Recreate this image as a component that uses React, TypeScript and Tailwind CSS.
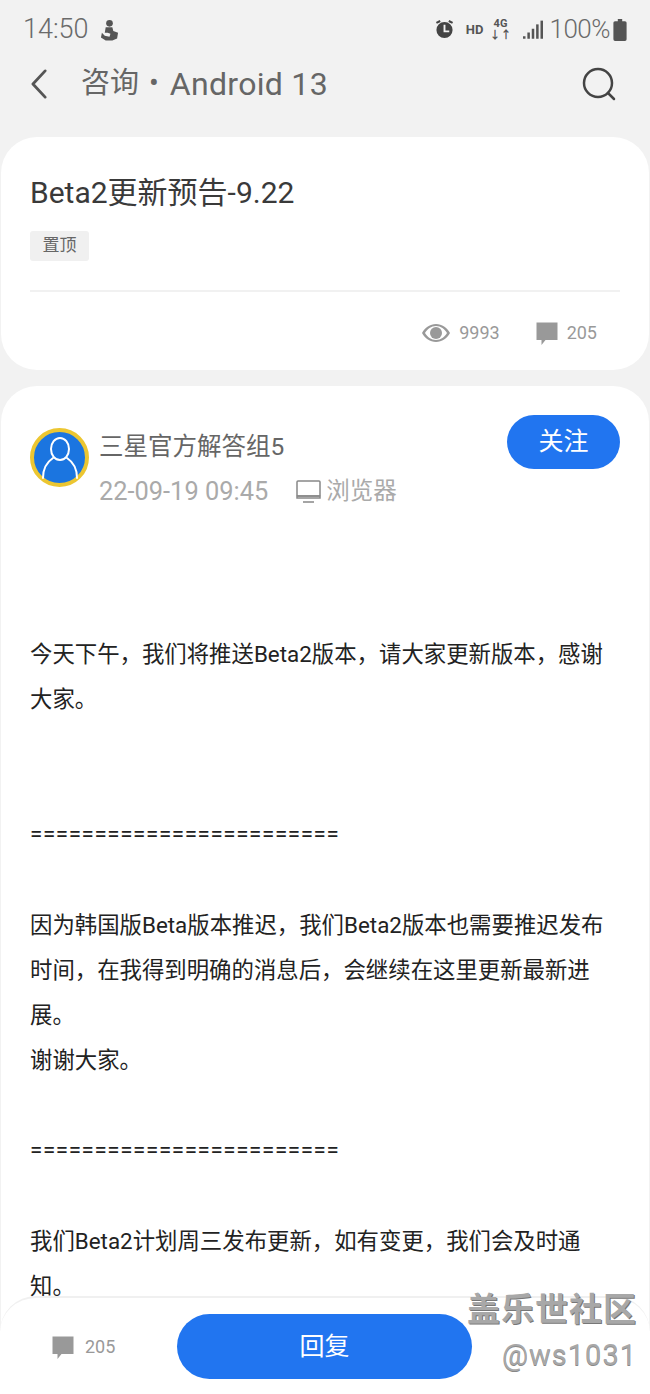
import React from "react";

const font = "font-['Roboto','Noto_Sans_CJK_SC',sans-serif]";

function CommentIcon({ className }: { className: string }) {
  return (
    <svg viewBox="0 0 24 24" className={className} fill="currentColor">
      <path d="M1.5 1.5h21v17.5H10.5L6.5 24v-5h-5z" />
    </svg>
  );
}

function StatusBar() {
  return (
    <div className="flex h-[58px] items-center justify-between pl-[23px] pr-[23px] pt-[1px] text-[#666]">
      <div className="flex items-center gap-[11px]">
        <span className="text-[27px] font-light text-[#6a6a6a]">14:50</span>
        <svg viewBox="0 0 20 22" className="h-[22px] w-[19px] text-[#555]" fill="currentColor">
          <circle cx="10" cy="4" r="3.500" />
          <path d="M6 8h7l1 4 5 2-1 6-5 2H6l-5-3 1-5 3 3 5 1 1-3-3-1-3 0z" />
        </svg>
      </div>
      <div className="flex items-center">
        <svg viewBox="0 0 20 22" className="h-[21px] w-[19px] text-[#444]" fill="currentColor">
          <path d="M1 3l4-2 1 2-4 2zM19 3l-4-2-1 2 4 2z" />
          <path fillRule="evenodd" d="M10 3a8.500 8.500 0 1 0 0 17 8.500 8.500 0 0 0 0-17zM9 6h2v6h4v2H9z" />
        </svg>
        <span className="ml-[12px] text-[13px] font-bold text-[#555]">HD</span>
        <div className="ml-[9px] flex w-[16px] flex-col items-center text-[11px] font-bold leading-[12px] text-[#555]">
          <span>4G</span>
          <span>↓↑</span>
        </div>
        <svg viewBox="0 0 16 16" className="ml-[14px] h-[20px] w-[20px] text-[#555]" fill="currentColor">
          <rect x="0" y="13" width="2" height="2" />
          <rect x="3.500" y="10" width="2" height="5" />
          <rect x="7" y="7" width="2" height="8" />
          <rect x="10.500" y="3.500" width="2" height="11.500" />
          <rect x="14" y="0.500" width="2" height="14.500" />
        </svg>
        <span className="ml-[7px] text-[26px] font-light tracking-[-0.5px] text-[#6a6a6a]">100%</span>
        <svg viewBox="0 0 12 20" className="ml-[3px] h-[22px] w-[14px] text-[#555]" fill="currentColor">
          <path d="M4 0h4v2h2.500A1.500 1.500 0 0 1 12 3.500V18.500A1.500 1.500 0 0 1 10.500 20h-9A1.500 1.500 0 0 1 0 18.500V3.500A1.500 1.500 0 0 1 1.500 2H4z" />
        </svg>
      </div>
    </div>
  );
}

function Header() {
  return (
    <div className="flex h-[52px] items-center justify-between pl-[30px] pr-[34px]">
      <div className="flex items-center">
        <svg viewBox="0 0 20 32" className="h-[30px] w-[19px] text-[#555]" fill="none" stroke="currentColor" strokeWidth="3">
          <path d="M16 2L3 16l13 14" strokeLinecap="round" strokeLinejoin="round" />
        </svg>
        <span className="ml-[32px] text-[29px] text-[#666]">咨询</span>
        <span className="ml-[10px] text-[29px] text-[#666]">•</span>
        <span className="ml-[11px] text-[32px] tracking-[0.3px] text-[#666]">Android 13</span>
      </div>
      <svg viewBox="0 0 34 34" className="h-[34px] w-[34px] text-[#444]" fill="none" stroke="currentColor" strokeWidth="2.500">
        <circle cx="16" cy="16" r="14" />
        <path d="M26 26l6 6" strokeLinecap="round" />
      </svg>
    </div>
  );
}

function TopicCard() {
  return (
    <div className="mt-[27px] h-[233px] rounded-[36px] bg-white px-[29px] pt-[36px]">
      <h1 className="text-[30px] leading-[40px] text-[#3a3a3a]">Beta2更新预告-9.22</h1>
      <div className="mt-[18px] flex">
        <span className="flex h-[30px] w-[59px] items-center justify-center rounded-[3px] bg-[#f0f0f0] text-[17px] text-[#666]">
          置顶
        </span>
      </div>
      <div className="mt-[29px] border-t-2 border-[#f1f1f1]" />
      <div className="mt-[27px] flex items-center justify-end pr-[23px] text-[#999]">
        <svg viewBox="0 0 28 18" className="h-[18px] w-[28px]" fill="currentColor">
          <path fillRule="evenodd" d="M14 0C8 0 3 3.500 0 9c3 5.500 8 9 14 9s11-3.500 14-9c-3-5.500-8-9-14-9zm0 2c-5 0-8.500 3-11 7 2.500 4 6 7 11 7s8.500-3 11-7c-2.500-4-6-7-11-7z" />
          <circle cx="14" cy="9" r="6" />
        </svg>
        <span className="ml-[9px] text-[18px]">9993</span>
        <CommentIcon className="ml-[35px] h-[24px] w-[24px]" />
        <span className="ml-[8px] text-[18px]">205</span>
      </div>
    </div>
  );
}

function AuthorRow() {
  return (
    <div className="flex items-start justify-between">
      <div className="flex">
        <div className="mt-[13px] flex h-[59px] w-[59px] items-center justify-center rounded-full border-[4px] border-[#ecc631] bg-[#1b75e0]">
          <svg viewBox="0 0 40 44" className="h-[44px] w-[40px] text-white" fill="none" stroke="currentColor" strokeWidth="2">
            <ellipse cx="20" cy="13" rx="9" ry="11" />
            <path d="M13 22C7 26 3 33 3 42M27 22c6 4 10 11 10 20" strokeLinecap="round" />
          </svg>
        </div>
        <div className="ml-[10px]">
          <div className="mt-[14px] text-[24.500px] leading-[36px] text-[#666]">三星官方解答组5</div>
          <div className="mt-[8px] flex items-center text-[#aaa]">
            <span className="text-[25.400px] leading-[36px]">22-09-19 09:45</span>
            <svg viewBox="0 0 26 24" className="ml-[28px] h-[24px] w-[26px] text-[#888]" fill="none" stroke="currentColor" strokeWidth="1.500">
              <rect x="1" y="2" width="23" height="15" rx="1" />
              <path d="M1 17h23v2H1zM7 23h11" />
            </svg>
            <span className="ml-[4px] text-[23.500px] leading-[36px]">浏览器</span>
          </div>
        </div>
      </div>
      <button className="flex h-[54px] w-[113px] items-center justify-center rounded-full bg-[#2175f0] text-[25px] text-white">
        关注
      </button>
    </div>
  );
}

const bodyLines = [
  "",
  "",
  "今天下午，我们将推送Beta2版本，请大家更新版本，感谢大家。",
  "",
  "",
  "========================",
  "",
  "因为韩国版Beta版本推迟，我们Beta2版本也需要推迟发布时间，在我得到明确的消息后，会继续在这里更新最新进展。",
  "谢谢大家。",
  "",
  "========================",
  "",
  "我们Beta2计划周三发布更新，如有变更，我们会及时通知。",
];

function PostCard() {
  return (
    <div className="mt-[16px] min-h-[1010px] rounded-t-[36px] bg-white px-[29px] pt-[29px]">
      <AuthorRow />
      <div className="mt-[33px] text-[22.400px] leading-[45.140px] text-[#222]">
        {bodyLines.map((line, i) => (
          <p
            key={i}
            className={
              line.startsWith("=")
                ? "min-h-[45.140px] pb-[4px] leading-[41.140px] tracking-[0.6px]"
                : "min-h-[45.140px]"
            }
          >
            {line}
          </p>
        ))}
      </div>
    </div>
  );
}

function BottomBar() {
  return (
    <div className="absolute inset-x-0 bottom-0 h-[98px] rounded-t-[36px] border-t-2 border-[#f0f0f0] bg-white">
      <div className="flex items-center pl-[51px] pt-[16px]">
        <CommentIcon className="h-[24px] w-[24px] text-[#999]" />
        <span className="ml-[10px] w-[92px] text-[18px] text-[#999]">205</span>
        <button className="flex h-[65px] w-[295px] items-center justify-center rounded-full bg-[#2175f0] text-[25px] text-white">
          回复
        </button>
      </div>
    </div>
  );
}

function Watermark() {
  return (
    <div className="absolute right-[13px] top-[1287px] flex flex-col items-end text-[#a8a8a8]">
      <span className="text-[33px] font-bold leading-[46px] tracking-[1px] [text-shadow:1px_1px_0_#777]">盖乐世社区</span>
      <span className="text-[29px] leading-[44px] tracking-[1px] [text-shadow:0_1px_0_#888]">@ws1031</span>
    </div>
  );
}

export default function App() {
  return (
    <div className={`relative h-[1394px] w-[650px] overflow-hidden bg-[#f2f2f2] ${font}`}>
      <StatusBar />
      <Header />
      <div className="px-[1px]">
        <TopicCard />
        <PostCard />
      </div>
      <BottomBar />
      <Watermark />
    </div>
  );
}
